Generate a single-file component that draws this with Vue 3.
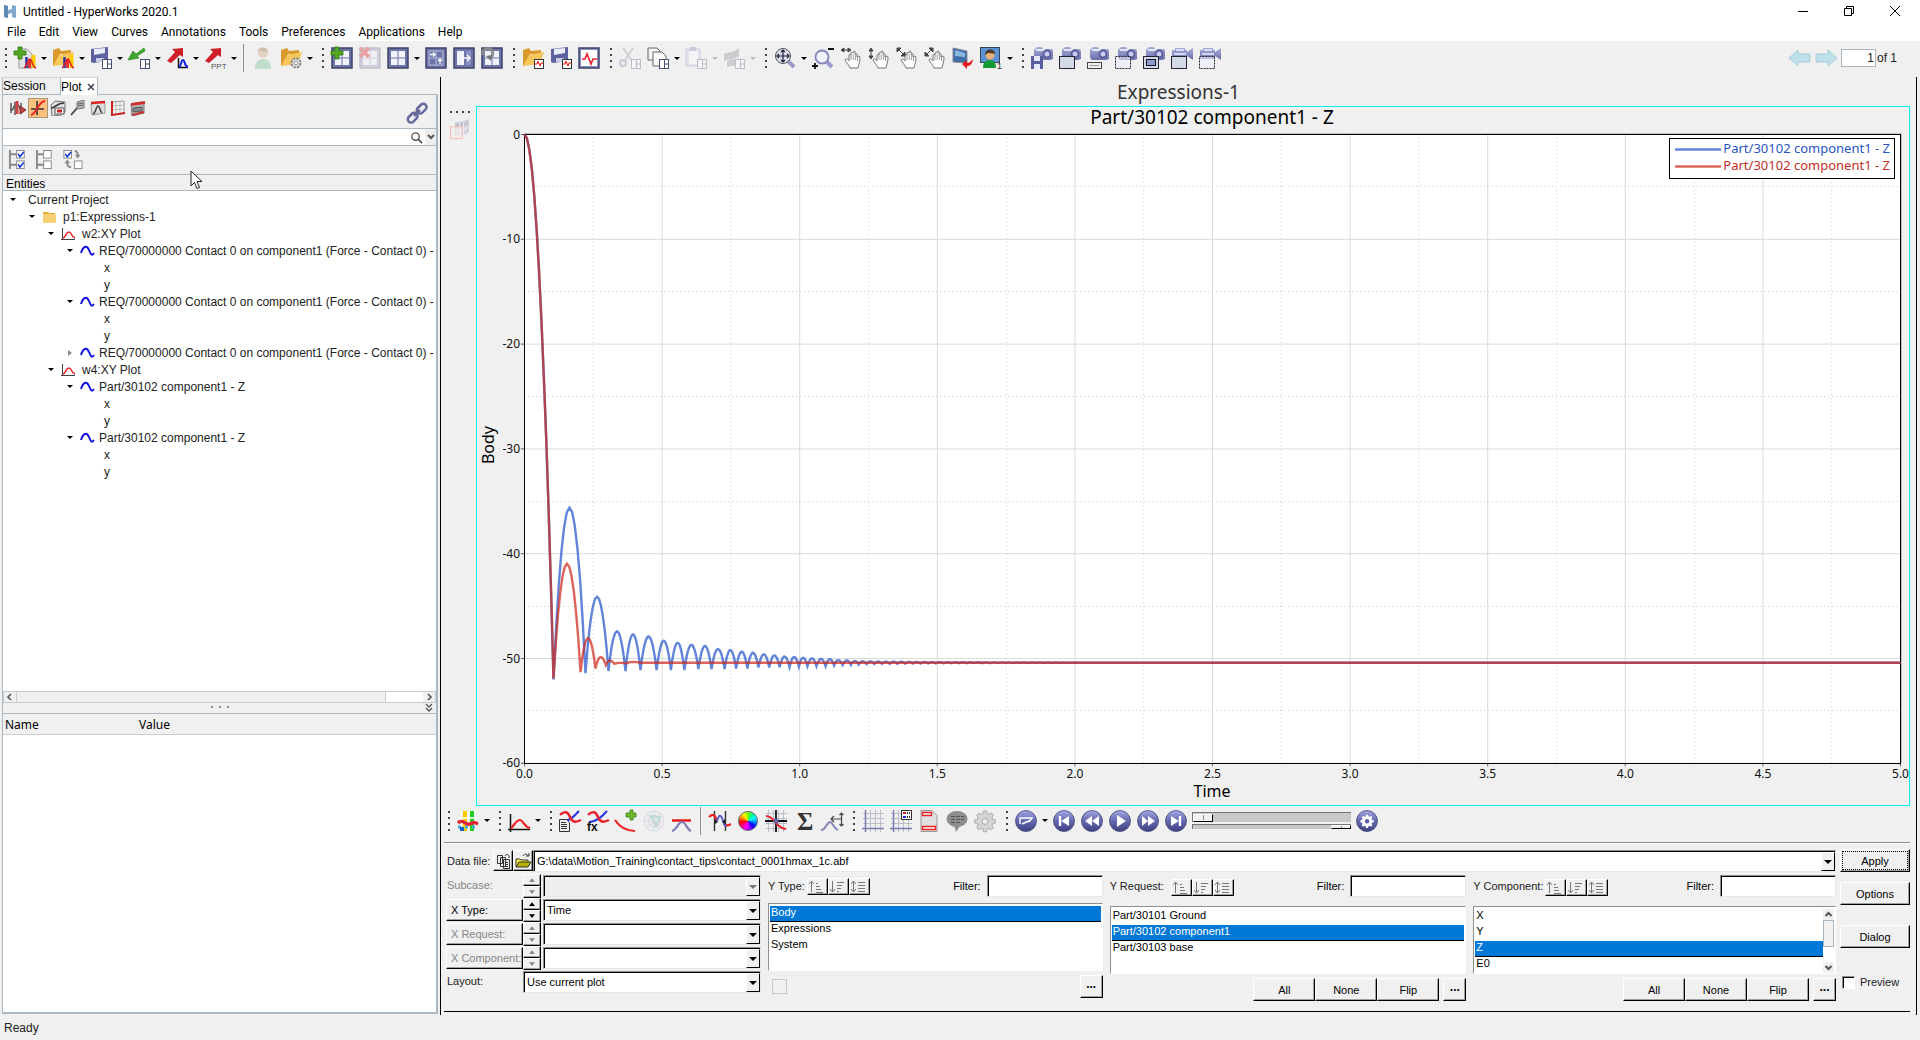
<script setup>
import { ref } from 'vue'

const menus = ['File', 'Edit', 'View', 'Curves', 'Annotations', 'Tools', 'Preferences', 'Applications', 'Help']

/* ---------- icon parts (22 x 22 grid) ---------- */
const pane = '<rect x="12.5" y="12.5" width="9" height="9" fill="#fff" stroke="#4a5078"/><path d="M17.5 13v8M17.5 17h4" stroke="#4a5078"/>'
const folder = '<path d="M1 3l6-2 2 3 10-1v4H8L4 18l-3 1z" fill="#d99a2b"/><path d="M1 19L7 8l15-3-4 12z" fill="#f7c65c"/>'
const bars = '<path d="M12.5 21V10" stroke="#23a" stroke-width="2.5"/><path d="M15.5 21V12" stroke="#e33" stroke-width="3"/><path d="M19.5 21V8" stroke="#fc0" stroke-width="4"/><path d="M10 21c3-2 4-9 6-9s2 8 6 9" fill="none" stroke="#d22" stroke-width="1.5"/>'
const floppy = '<path d="M1 2l17-2v14L3 16l-2-1z" fill="#5c62a0"/><path d="M4 2l11-1v5L4 8z" fill="#e9ebfa"/><path d="M6 11h8v4H6z" fill="#c9cbe6"/>'
const plus = '<path d="M4 0h4v4h4v4H8v4H4V8H0V4h4z" fill="#55a822" stroke="#2f7a10" stroke-width=".8"/>'
const redArrow = '<path d="M1 14L9 5 6 2l11-1v9l-3-2-9 8z" fill="#cf1f28"/>'
const win = '<rect x="1" y="1" width="20" height="20" fill="#6d74a8" stroke="#3c4268" stroke-width="1.5"/>'
const four = '<path d="M4 4h6.5v6.5H4zM11.5 4H18v6.5h-6.5zM4 11.5h6.5V18H4zM11.5 11.5H18V18h-6.5z" fill="#f2f3fc"/>'
const wave = '<rect x="12.5" y="12.5" width="9" height="9" fill="#fff" stroke="#333"/><path d="M13 17h2l1-3 2 5 1-3h2" fill="none" stroke="#e11"/>'
const hand = '<path d="M10 21c-1-3-4-6-5-8 1-2 3-1 4 1V8c1-1 2-1 2 0V6c1-1 2-1 2 0V5c1-1 2-1 2 0v2c1-1 2 0 2 0v3c1-1 3-1 3 0 0 4-1 7-2 11z" fill="#fff" stroke="#666" stroke-width=".9"/><path d="M11 8v5M13.2 7v6M15.4 7v6M17.5 9v5" stroke="#777" stroke-width=".7"/>'
const camera = '<path d="M3 3l3-3h5l1 2h9l1 2v8l-3 1H5l-2-2z" fill="url(#steel)"/><rect x="5" y="2" width="9" height="2" fill="#e5e6f8"/><circle cx="16" cy="7" r="4.5" fill="#5a5f9c"/><circle cx="16" cy="7" r="2.5" fill="#c9ccf2"/>'
const video = '<path d="M1 3h3V1h10v2h2v2l6-4v12l-6-4v3H1z" fill="url(#steel)"/><path d="M5 3h8M3 7h12" stroke="#eef" stroke-width="1.5"/>'
const frame = '<rect x=".5" y="9.5" width="15" height="12" fill="#d3d9e6" stroke="#223"/>'
const dashed = '<rect x=".5" y="9.5" width="15" height="12" fill="#eef" fill-opacity=".6" stroke="#223" stroke-dasharray="2 1"/>'
const ball = '<circle cx="11" cy="11" r="10.5" fill="url(#ball)" stroke="#45487c" stroke-width=".8"/>'
const lens = '<path d="M13 13l7 7" stroke="#9a9cce" stroke-width="4"/>'
const gridLines = '<path d="M1 3.5h21M1 8.5h21M1 13.5h21M1 18.5h21M3.5 0v22M8.5 0v22M13.5 0v22M18.5 0v22" stroke="#bdbdcb"/>'
const pair = '<path d="M2 12C8 12 14 8 20 1" fill="none" stroke="#2536e8" stroke-width="2"/><path d="M1 5c5-5 8-3 10 2s5 6 11 3" fill="none" stroke="#e8202a" stroke-width="2.4"/>'
const gearPath = 'M9.5 1h3l.6 2.6 1.9.8 2.3-1.4 2.1 2.1L18 7.4l.8 1.9 2.6.6v3l-2.6.6-.8 1.9 1.4 2.3-2.1 2.1-2.3-1.4-1.9.8-.6 2.6h-3l-.6-2.6-1.9-.8-2.3 1.4-2.1-2.1L4 15.4l-.8-1.9-2.6-.6v-3l2.6-.6.8-1.9-1.4-2.3L4.7 3 7 4.4l1.9-.8z'

const icons = {
  newSession: '<path d="M5 2h8l5 5v14H5z" fill="#e2e2e2" stroke="#999"/>' + bars + plus,
  openSession: folder + bars,
  saveSession: floppy + pane,
  importFile: '<path d="M16 1L8 7 5 4 0 13l11-2-2-2 8-5z" fill="#3da62c" stroke="#267a18" stroke-width=".6"/>' + pane,
  exportCurve: redArrow + '<path d="M12.5 11v9.5H22" fill="none" stroke="#111" stroke-width="1.5"/><path d="M13 20c2 0 2-7 4-7s1 6 5 7" fill="none" stroke="#1620e0" stroke-width="2"/>',
  exportPpt: redArrow + '<text x="7" y="22" font-size="8" font-family="Liberation Sans, sans-serif" fill="#555">PPT</text>',
  user: '<g opacity=".45"><path d="M3 22c0-8 4-10 8-10s8 2 8 10z" fill="#8cc8a4"/><circle cx="11" cy="6" r="5" fill="#d8b48c"/><path d="M6 5c0-6 10-6 10 1-3-3-6 0-7-2z" fill="#a08468"/></g>',
  folderGear: folder + '<circle cx="16" cy="16" r="4.5" fill="#ececec" stroke="#8a8a8a" stroke-width="2" stroke-dasharray="2.5 1"/><circle cx="16" cy="16" r="2" fill="#fff" stroke="#888"/>',
  pageAdd: win + four + plus,
  pageDelete: '<g opacity=".25">' + win + four + '</g><path d="M1 1l9 9M10 1l-9 9" stroke="#eaa0a0" stroke-width="3.5"/>',
  pageLayout: win + four,
  expand: win + '<path d="M4 4h14v14H4zM4 11h7M11 4v14M11 11h7" fill="none" stroke="#b9bde0"/><path d="M5 7.5h5M8 5.5l2 2-2 2M15 17v-5M13 14l2-2 2 2" fill="none" stroke="#fff" stroke-width="1.3"/>',
  swap: win + '<path d="M4 4h7v14H4z" fill="#f2f3fc"/><path d="M13 4h5v14h-5z" fill="#8b91c4"/><path d="M10 11h7M14 8l3 3-3 3" fill="none" stroke="#fff" stroke-width="1.4"/>',
  rotatePage: win + four + '<path d="M2 8a5 5 0 1 1 7 3" fill="none" stroke="#8c8c8c" stroke-width="3"/><path d="M5 9l6-1-1 6z" fill="#777"/>',
  openCurve: folder + wave,
  saveCurve: floppy + wave,
  curveWin: '<rect x="1" y="1" width="20" height="20" fill="#8a90bc" stroke="#3c4268" stroke-width="1.5"/><rect x="3" y="3" width="16" height="16" fill="#fff"/><path d="M4 12h3l2-5 4 10 2-5h4" fill="none" stroke="#e8202a" stroke-width="1.6"/>',
  cut: '<g opacity=".3"><path d="M4 1l10 14M14 1L5 15" stroke="#889" stroke-width="2"/><circle cx="4" cy="16" r="3" fill="none" stroke="#77a" stroke-width="2"/>' + pane + '</g>',
  copy: '<path d="M1 1h9l3 3v9H1z" fill="#f4f4f4" stroke="#666"/><path d="M6 5h9l4 4v10H6z" fill="#fafafa" stroke="#666"/>' + pane,
  paste: '<g opacity=".3"><rect x="1" y="2" width="14" height="17" fill="#b8bce8" stroke="#88c"/><rect x="4" y="4" width="9" height="13" fill="#fff"/><rect x="5" y="0" width="6" height="4" fill="#77b"/>' + pane + '</g>',
  layers: '<g opacity=".3"><path d="M1 7c5-3 8 0 15-6v8c-6 5-10 2-15 5zM4 14c5-3 7 0 12-3v6c-5 3-8 1-12 3z" fill="#778"/>' + pane + '</g>',
  fit: lens + '<circle cx="9" cy="9" r="7.5" fill="#dfe0f6" stroke="#555"/><path d="M9 3v12M3 9h12M7 5l2-2 2 2M7 13l2 2 2-2M5 7L3 9l2 2M13 7l2 2-2 2" fill="none" stroke="#223" stroke-width="1.2"/>',
  zoomBox: lens + '<circle cx="10" cy="10" r="6.5" fill="#f0f1fd" stroke="#8285b8" stroke-width="1.8"/><path d="M16 2h6M0 19h6M3 16v6" stroke="#111" stroke-width="1.8"/>',
  panX: hand + '<path d="M2 3h8M4 1L1 3l3 2zM8 1l3 2-3 2z" fill="#444" stroke="#444"/>',
  panY: hand + '<path d="M3 3v8M1 4l2-3 2 3zM1 9l2 3 2-3z" fill="#444" stroke="#444"/>',
  panXY: hand + '<path d="M2 2l6 6M1 1h4L1 5zM9 9H5l4-4z" fill="#444" stroke="#444"/>',
  panD: hand + '<path d="M8 2L2 8M9 1v4L5 1zM1 9V5l4 4z" fill="#444" stroke="#444"/>',
  screenBack: '<path d="M1 1l14 3v12L1 15z" fill="#3d6ea8" stroke="#889"/><path d="M3 3l10 3v4L3 9z" fill="#8ab8e0"/><path d="M10 17l5-4v3c3 0 4-2 6-4-1 6-3 7-6 7v3z" fill="#e0141c"/>',
  userView: '<rect x=".5" y=".5" width="19" height="15" fill="#5b92d4" stroke="#345"/><path d="M3 21c0-6 3-8 7-8s6 3 6 8z" fill="#149a34"/><circle cx="10" cy="8" r="4.5" fill="#e9b07a"/><path d="M5 8c0-7 10-7 10-1-3-1-5-1-7-1z" fill="#50382a"/><text x="17" y="22" font-size="9" font-family="Liberation Sans, sans-serif" fill="#333">1</text>',
  camSave: camera + '<rect x="0" y="9" width="12" height="13" fill="#585ea0"/><path d="M3 9h6v5H3zM3 17h6v5H3z" fill="#e6e8fa"/>',
  camFrame: camera + frame,
  camBar: camera + '<rect x=".5" y="15.5" width="14" height="6" fill="#eee" stroke="#444"/><path d="M3 18.5h9" stroke="#999"/>',
  camDash: camera + dashed,
  camRegion: camera + frame + '<rect x="3.5" y="12.5" width="9" height="6" fill="#8f9ad0" stroke="#112"/>',
  vidFrame: video + frame,
  vidDash: video + dashed,
  prev: '<path d="M1 9l9-8v4h12v8H10v4z" fill="#bfe0e8" stroke="#a8cdd8"/>',
  next: '<path d="M21 9l-9-8v4H0v8h12v4z" fill="#bfe0e8" stroke="#a8cdd8"/>',
  app: '<rect x="1" y="1" width="20" height="20" rx="4" fill="#e8e8ea"/><path d="M8 1v20" stroke="#fc0" stroke-width="4"/><path d="M15 1v20" stroke="#2c2" stroke-width="4"/><path d="M1 8h20M4 1v20M11.5 1v20M18.5 1v20" stroke="#fff" stroke-width="1.5"/><path d="M1 17h20" stroke="#4ad" stroke-width="3" stroke-dasharray="3 4"/><path d="M1 13c5-5 8 3 12 1s4-2 8 0" fill="none" stroke="#e22435" stroke-width="3.5"/><path d="M3 17h4v4H3z" fill="#1560c0"/>',
  xyPlot: '<path d="M2.5 4v18M0 19.5h22" stroke="#111" stroke-width="1.5"/><path d="M3 18c3-2 5-8 9-8 3 0 4 7 10 8" fill="none" stroke="#e22" stroke-width="2.2"/>',
  curveList: pair + '<path d="M.5 9.5h7l3 3v9H.5z" fill="#eee" stroke="#333"/><path d="M2 12.5h5M2 14.5h6M2 16.5h6M2 18.5h6" stroke="#333"/>',
  curveFx: pair + '<text x="0" y="21" font-size="12" font-weight="bold" font-family="Liberation Sans, sans-serif" fill="#111">fx</text>',
  curveAdd: '<path d="M0 10c4 6 10 11 20 11" fill="none" stroke="#e22" stroke-width="2.2"/><path d="M15 0h3v3h3v4h-3v3h-3V7h-4V3h4z" fill="#6bb82a" stroke="#398012" stroke-width=".8"/>',
  radar: '<g opacity=".3"><circle cx="11" cy="11" r="10" fill="#e6e6f4" stroke="#aac"/><circle cx="11" cy="11" r="6" fill="none" stroke="#99b"/><path d="M1 11h20M11 1v20M4 4l14 14M18 4L4 18" stroke="#aab"/><path d="M8 6l9 1-4 9z" fill="none" stroke="#4a8" stroke-width="2"/></g>',
  maxLine: '<path d="M1 10.5h19" stroke="#e81010" stroke-width="2.4"/><path d="M1 21c5-1 6-9 10-9s5 8 9 9" fill="none" stroke="#7a7cb4" stroke-width="2.2"/>',
  scan: '<path d="M5.5 1v20M16.5 1v20" stroke="#333" stroke-width="1.4"/><path d="M0 7c4-4 6-2 8 4" fill="none" stroke="#e22" stroke-width="2.2"/><path d="M8 11c2-7 4-7 6 0s3 5 4 4" fill="none" stroke="#5a5ed0" stroke-width="2"/><path d="M17 15c2 1 3 0 5-1" stroke="#e22" stroke-width="2.2" fill="none"/><path d="M6 9v5l3-2zM16 9v5l-3-2z" fill="#222"/>',
  cross: gridLines + '<path d="M0 11h22M11 0v22" stroke="#111" stroke-width="1.8"/><path d="M1 6c9 0 9 12 20 13" fill="none" stroke="#e22" stroke-width="1.8"/><circle cx="11" cy="11" r="2.5" fill="#66a"/>',
  sigma: '<text x="4" y="20" font-size="25" font-weight="bold" font-family="Liberation Serif, serif" fill="#333">Σ</text>',
  slope: '<path d="M0 20c5 0 6-8 9-8s3 6 8 8" fill="none" stroke="#8486b8" stroke-width="2"/><path d="M11 9h9M13 6l-3 3 3 3M20.5 3v13M18.5 5l2-2 2 2M18.5 14l2 2 2-2" fill="none" stroke="#444" stroke-width="1.2"/>',
  gridA: gridLines + '<path d="M3.5 0v22M0 18.5h22" stroke="#7a7cae" stroke-width="1.5"/>',
  gridB: gridLines + '<path d="M3.5 0v22M0 18.5h22" stroke="#7a7cae" stroke-width="1.5"/><rect x="11.5" y=".5" width="10" height="9" fill="#fff" stroke="#333"/><path d="M13 3h3" stroke="#e22" stroke-width="2"/><path d="M13 7h3" stroke="#22e" stroke-width="2"/><path d="M17 3h3M17 7h3" stroke="#333" stroke-width="2" stroke-dasharray="1"/>',
  header: '<path d="M3 .5h11l5 5V21.5H3z" fill="#e0e0e0" stroke="#999"/><path d="M4.5 2.5h9v3h-9zM4.5 16.5h13v3h-13z" fill="#fff" stroke="#e22" stroke-width="1.4"/>',
  note: '<ellipse cx="11" cy="9" rx="10.5" ry="8" fill="#8e8e8e"/><path d="M8 15l2 7 4-6z" fill="#8e8e8e"/><path d="M5 6.5h13M5 9.5h13M5 12.5h10" stroke="#555" stroke-width="1.2" stroke-dasharray="4 1"/>',
  gearGray: '<path d="' + gearPath + '" fill="#d4d4d4" stroke="#aaa"/><circle cx="11" cy="11.4" r="3" fill="#efefef" stroke="#aaa"/>',
  animMode: ball + '<path d="M5 14V8h12l-3 4M7 14l9-4" fill="none" stroke="#fff" stroke-width="1.4"/>',
  first: ball + '<path d="M7 6v10" stroke="#fff" stroke-width="2.4"/><path d="M16 6v10l-8-5z" fill="#fff"/>',
  rewind: ball + '<path d="M11 6v10l-7-5zM18 6v10l-7-5z" fill="#fff"/>',
  play: ball + '<path d="M8 5v12l9-6z" fill="#fff"/>',
  forward: ball + '<path d="M11 6v10l7-5zM5 6v10l6-5z" fill="#fff"/>',
  last: ball + '<path d="M15 6v10" stroke="#fff" stroke-width="2.4"/><path d="M6 6v10l8-5z" fill="#fff"/>',
  gearBall: ball + '<g transform="translate(4 4) scale(.64)"><path d="' + gearPath + '" fill="#fff"/><circle cx="11" cy="11.4" r="3.5" fill="#5d62a8"/></g>',
  mesh: '<path d="M6 3c5 0 9-1 14-3v13c-5 4-9 3-14 4z" fill="#d6d8e0" stroke="#c6c8d2"/><path d="M6 4c5 0 9-1 14-3v4c-5 2-9 3-14 3z" fill="#bfc1cc"/><path d="M11 3v14M15 2v14M6 12c5 0 9-1 14-4" fill="none" stroke="#eef"/><rect x=".5" y="7.5" width="13" height="13" fill="#f5ecea" fill-opacity=".6" stroke="#f5b9ae"/>'
}

const topTools = [
  { icon: 'handle' },
  { icon: 'newSession', menu: 1 }, { icon: 'openSession', menu: 1 }, { icon: 'saveSession', menu: 1 },
  { icon: 'importFile', menu: 1 }, { icon: 'exportCurve', menu: 1 }, { icon: 'exportPpt', menu: 1 },
  { icon: 'sep' }, { icon: 'user' }, { icon: 'folderGear', menu: 1 },
  { icon: 'handle' }, { icon: 'pageAdd' }, { icon: 'pageDelete' }, { icon: 'pageLayout', menu: 1 },
  { icon: 'expand' }, { icon: 'swap' }, { icon: 'rotatePage' },
  { icon: 'handle' }, { icon: 'openCurve' }, { icon: 'saveCurve' }, { icon: 'curveWin' },
  { icon: 'handle' }, { icon: 'cut' }, { icon: 'copy', menu: 1 }, { icon: 'paste', menu: 1, off: 1 }, { icon: 'layers', menu: 1, off: 1 },
  { icon: 'handle' }, { icon: 'fit', menu: 1 }, { icon: 'zoomBox' }, { icon: 'panX' }, { icon: 'panY' },
  { icon: 'panXY' }, { icon: 'panD' }, { icon: 'screenBack' }, { icon: 'userView', menu: 1 },
  { icon: 'handle' }, { icon: 'camSave' }, { icon: 'camFrame' }, { icon: 'camBar' }, { icon: 'camDash' },
  { icon: 'camRegion' }, { icon: 'vidFrame' }, { icon: 'vidDash' }
]
const plotTools = [
  { icon: 'handle' }, { icon: 'app', menu: 1 }, { icon: 'handle' }, { icon: 'xyPlot', menu: 1 },
  { icon: 'handle' }, { icon: 'curveList' }, { icon: 'curveFx' }, { icon: 'curveAdd' }, { icon: 'radar' }, { icon: 'maxLine' },
  { icon: 'sep' }, { icon: 'scan' }, { icon: 'wheel' }, { icon: 'cross' }, { icon: 'sigma' }, { icon: 'slope' },
  { icon: 'handle' }, { icon: 'gridA' }, { icon: 'gridB' }, { icon: 'header' }, { icon: 'note' }, { icon: 'gearGray' },
  { icon: 'handle' }, { icon: 'animMode', menu: 1 }, { icon: 'first' }, { icon: 'rewind' }, { icon: 'play' },
  { icon: 'forward' }, { icon: 'last' }
]

/* ---------- browser panel (16 x 16 grid) ---------- */
const browserTools = [
  { name: 'Curves', art: '<path d="M1 3v10M5 2v13M11 3v11M1 11c3-1 3-8 6-7s3 8 6 8" fill="none" stroke="#555" stroke-width="1.5"/><path d="M7 1v13" stroke="#c44" stroke-width="3"/><path d="M10 6l6 4-6 4z" fill="#c44" stroke="#733"/>' },
  { name: 'Axes', on: true, art: '<path d="M1 9h13M7 1v14" stroke="#333" stroke-width="1.6"/><path d="M1 15c7-2 6-13 14-14" fill="none" stroke="#e22" stroke-width="2"/>' },
  { name: 'Legend', art: '<path d="M1 5l4-4 10 1v10l-4 3-9 1z" fill="#ddd" stroke="#777"/><path d="M1 8c5 0 5-5 13-5" fill="none" stroke="#333" stroke-width="1.5"/><rect x="5" y="8" width="9" height="6" fill="#fff" stroke="#555"/><path d="M7 11h5" stroke="#c22" stroke-width="3"/>' },
  { name: 'Notes', art: '<path d="M1 15l7-8" stroke="#444" stroke-width="1.8"/><path d="M7 2l7-2v8l-7 1z" fill="#bbb" stroke="#777"/><path d="M8 4l5-1M8 6l5-1" stroke="#555"/>' },
  { name: 'Datums', art: '<path d="M1 4l14-2v11l-13 2z" fill="#ddd" stroke="#999"/><path d="M1 3l14-1" stroke="#d22" stroke-width="2.5"/><path d="M3 14c3-1 3-8 5-8s2 6 4 7" fill="none" stroke="#444" stroke-width="1.5"/>' },
  { name: 'Grid', art: '<path d="M2 2l12-1v12l-12 2z" fill="#f6f6f6" stroke="#999"/><path d="M6 2v12M10 2v12M2 6l12-1M2 10l12-1" stroke="#bbb"/><path d="M2 1v14l13-2" fill="none" stroke="#c22" stroke-width="2"/>' },
  { name: 'Header', art: '<path d="M1 4l13-2v11l-12 3z" fill="#bbb" stroke="#777"/><path d="M1 3l14-2v3L1 6z" fill="#c33"/><path d="M3 8l9-1v4l-9 1z" fill="#888" stroke="#555"/><path d="M2 15l12-3" fill="none" stroke="#c33" stroke-width="2"/>' }
]
const box = (x, y, on) => `<rect x="${x}.5" y="${y}.5" width="8" height="8" fill="#fff" stroke="#888"/>` + (on ? `<path d="M${x + 2} ${y + 4}l2 3 4-5" fill="none" stroke="#1030d0" stroke-width="1.6"/>` : '')
const branch = '<path d="M1.5 0v20M2 4.5h6M2 15.5h6" stroke="#888" stroke-width="2"/>'
const checkTools = [
  { name: 'Check all', art: branch + box(8, 0, 1) + box(8, 11, 1) },
  { name: 'Uncheck all', art: branch + box(8, 0, 0) + box(8, 11, 0) },
  { name: 'Reverse', art: box(1, 0, 1) + box(12, 11, 0) + '<path d="M13 1c2 0 3 2 3 5M9 18c-3 0-4-2-4-4" fill="none" stroke="#888" stroke-width="2"/><path d="M13 5h6l-3 4zM2 14h6l-3-4z" fill="#888"/>' }
]

const treeIcons = {
  folder: '<path d="M1 2h5l1 1h6v10H1z" fill="#e2a93c"/><rect x="1" y="4" width="13" height="9" rx="1" fill="#f8cf74"/>',
  plot: '<path d="M1.5 1v12M0 12.5h14" stroke="#444"/><path d="M2 11c3-1 3-6 6-6s2 5 6 6" fill="none" stroke="#e22" stroke-width="1.5"/>',
  curve: '<path d="M1 9c2-7 6-8 8-3s3 6 5 3" fill="none" stroke="#1010e0" stroke-width="2"/>'
}
const req = 'REQ/70000000 Contact 0 on component1 (Force - Contact 0) - I'
const part = 'Part/30102 component1 - Z'
const leaf = t => ({ level: 4, text: t })
const tree = [
  { level: 0, text: 'Current Project', open: true },
  { level: 1, text: 'p1:Expressions-1', icon: 'folder', open: true },
  { level: 2, text: 'w2:XY Plot', icon: 'plot', open: true },
  { level: 3, text: req, icon: 'curve', open: true }, leaf('x'), leaf('y'),
  { level: 3, text: req, icon: 'curve', open: true }, leaf('x'), leaf('y'),
  { level: 3, text: req, icon: 'curve', open: false },
  { level: 2, text: 'w4:XY Plot', icon: 'plot', open: true },
  { level: 3, text: part, icon: 'curve', open: true }, leaf('x'), leaf('y'),
  { level: 3, text: part, icon: 'curve', open: true }, leaf('x'), leaf('y')
]

/* ---------- chart ---------- */
const px = t => 47.5 + t * 275.2
const py = v => 27.5 - v * 10.48
const xTicks = Array.from({ length: 11 }, (_, i) => i / 2)
const yTicks = [0, -10, -20, -30, -40, -50, -60]

// One bounce per row: end time, peak, value at the end
const blue = [
  [0.2217, -35.6, -51.4], [0.3052, -44.1, -51.2], [0.367, -47.4, -51.2], [0.4215, -47.7, -51.1], [0.48, -47.9, -51.1],
  [0.532, -48.3, -51.1], [0.581, -48.5, -51.1], [0.632, -48.7, -51], [0.6795, -48.8, -51], [0.727, -49.1, -51],
  [0.769, -49.2, -50.95], [0.81, -49.35, -50.95], [0.85, -49.45, -50.86], [0.889, -49.6, -50.86], [0.927, -49.7, -50.82],
  [0.963, -49.82, -50.82], [0.997, -49.87, -50.76], [1.028, -49.93, -50.73], [1.061, -50, -50.73], [1.094, -50.05, -50.73],
  [1.125, -50.07, -50.67], [1.156, -50.16, -50.63], [1.186, -50.18, -50.6], [1.214, -50.24, -50.57]
]
for (let i = 0, t = 1.243; t < 2.6; i++, t += 0.028) {
  const a = 0.13 * Math.exp(-i / 12)
  blue.push([t, -50.4 + a, -50.4 - a])
}
blue.push([5, -50.4, -50.4])
const red = [
  [0.2035, -40.95, -51.3], [0.258, -48.05, -50.95], [0.2955, -49.87, -50.63], [0.326, -50.2, -50.5],
  [0.37, -50.42, -50.45], [0.42, -50.33, -50.4], [5, -50.4, -50.4]
]
function curve(bounces, floor) {
  const pts = []
  for (let i = 0; i <= 12; i++) {
    pts.push([0.1054 * i / 12, floor * (i / 12) ** 2])
  }
  let t0 = 0.1054
  let v0 = floor
  for (const [t1, peak, v1] of bounces) {
    for (let k = 1; k <= 12; k++) {
      const u = k / 6 - 1
      const end = u < 0 ? v0 : v1
      pts.push([t0 + (t1 - t0) * k / 12, peak + (end - peak) * u * u])
    }
    t0 = t1
    v0 = v1
  }
  return pts.map(([t, v]) => px(t).toFixed(1) + ',' + py(v).toFixed(1)).join(' ')
}
const bluePoints = curve(blue, -52)
const redPoints = curve(red, -51.9)

/* ---------- data panel ---------- */
const sortArt = [
  '<path d="M3.5 12V1M1 4l2.5-3L6 4M8 3.5h2M8 6.5h4M8 9.5h5M8 12.5h7" fill="none" stroke="#777"/>',
  '<path d="M3.5 1v11M1 9l2.5 3L6 9M8 2.5h7M8 5.5h5M8 8.5h4M8 11.5h2" fill="none" stroke="#777"/>',
  '<path d="M3.5 1v11M1 4l2.5-3L6 4M1 9l2.5 3L6 9M8 2.5h7M8 5.5h7M8 8.5h7M8 11.5h7" fill="none" stroke="#777"/>'
]
const xRows = [
  { id: 'sub', label: 'Subcase:', kind: 'label', value: '', off: true },
  { id: 'xt', label: 'X Type:', kind: 'button', value: 'Time' },
  { id: 'xr', label: 'X Request:', kind: 'button', value: '', dim: true },
  { id: 'xc', label: 'X Component:', kind: 'button', value: '', dim: true }
]
const yCols = [
  { id: 'type', label: 'Y Type:', items: ['Body', 'Expressions', 'System'], picked: 'Body' },
  { id: 'req', label: 'Y Request:', items: ['Part/30101 Ground', 'Part/30102 component1', 'Part/30103 base'], picked: 'Part/30102 component1', all: true },
  { id: 'comp', label: 'Y Component:', items: ['X', 'Y', 'Z', 'E0'], picked: 'Z', all: true, scroll: true }
]
const page = ref('1')
const preview = ref(false)
</script>

<template>
  <div class="app">
    <svg class="defs" aria-hidden="true">
      <defs>
        <linearGradient id="steel" x1="0" y1="0" x2="0" y2="1">
          <stop offset="0" stop-color="#a9acd8" /><stop offset="1" stop-color="#6a6eaa" />
        </linearGradient>
        <linearGradient id="ball" x1="0" y1="0" x2="0" y2="1">
          <stop offset="0" stop-color="#a3a6e0" /><stop offset=".5" stop-color="#6468b0" /><stop offset="1" stop-color="#3e4280" />
        </linearGradient>
      </defs>
    </svg>

    <header class="titlebar">
      <svg class="logo" viewBox="0 0 12 13"><path d="M0 0l4 1v4l4-1V0l4 1v12l-4-1V8L4 9v4l-4-1z" fill="#7fa8cc" /><path d="M0 0l4 1v12l-4-1z" fill="#5d8ab4" /></svg>
      <h1>Untitled - HyperWorks 2020.1</h1>
      <div class="winbtns">
        <button aria-label="Minimize"><svg viewBox="0 0 12 12"><path d="M1 6.5h10" stroke="#000" /></svg></button>
        <button aria-label="Restore"><svg viewBox="0 0 12 12"><path d="M1.5 3.5h7v7h-7zM3.5 3V1.5h7v7H9" fill="none" stroke="#000" /></svg></button>
        <button aria-label="Close"><svg viewBox="0 0 12 12"><path d="M1 1l10 10M11 1L1 11" stroke="#000" /></svg></button>
      </div>
    </header>

    <nav class="menubar">
      <button v-for="m in menus" :key="m">{{ m }}</button>
    </nav>

    <div class="toolbar top">
      <template v-for="(t, i) in topTools" :key="i">
        <span v-if="t.icon === 'handle'" class="handle"></span>
        <span v-else-if="t.icon === 'sep'" class="sep"></span>
        <template v-else>
          <button class="tool" :aria-label="t.icon"><svg class="icon" viewBox="0 0 22 22" v-html="icons[t.icon]"></svg></button>
          <button v-if="t.menu" class="caret" :class="{ off: t.off }" :aria-label="t.icon + ' menu'"></button>
        </template>
      </template>
      <div class="pager">
        <button class="tool" aria-label="Previous page"><svg class="icon" viewBox="0 0 22 18" v-html="icons.prev"></svg></button>
        <button class="tool" aria-label="Next page"><svg class="icon" viewBox="0 0 22 18" v-html="icons.next"></svg></button>
        <input id="page" v-model="page" type="text"><label for="page">of 1</label>
      </div>
    </div>

    <div class="body">
      <aside class="browser">
        <div class="tabs">
          <button class="tab">Session</button>
          <button class="tab active">Plot <svg viewBox="0 0 8 8"><path d="M1 1l6 6M7 1L1 7" stroke="#445" stroke-width="1.5" /></svg></button>
        </div>
        <div class="pane">
          <div class="btools">
            <button v-for="b in browserTools" :key="b.name" :aria-label="b.name" :class="{ on: b.on }"><svg viewBox="0 0 16 16" v-html="b.art"></svg></button>
            <button class="link" aria-label="Link">
              <svg viewBox="0 0 22 22"><g fill="none" stroke="#666a9e" stroke-width="2.5"><rect x="-5.5" y="-3" width="11" height="6.5" rx="3.2" transform="translate(15.5 6.5) rotate(-45)" /><rect x="-5.5" y="-3" width="11" height="6.5" rx="3.2" transform="translate(6.5 15.5) rotate(-45)" /><path d="M8 14l6-6" /></g></svg>
            </button>
          </div>
          <div class="search">
            <input type="text" aria-label="Search">
            <svg viewBox="0 0 14 14"><circle cx="6" cy="6" r="4" fill="none" stroke="#555" stroke-width="1.5" /><path d="M9 9l4 4" stroke="#555" stroke-width="2" /></svg>
            <button aria-label="Search options"><svg viewBox="0 0 8 6"><path d="M1 1l3 3 3-3" fill="none" stroke="#555" stroke-width="2" /></svg></button>
          </div>
          <div class="ctools">
            <button v-for="c in checkTools" :key="c.name" :aria-label="c.name"><svg viewBox="0 0 21 21" v-html="c.art"></svg></button>
          </div>
          <div class="entities">Entities</div>
          <ul class="tree">
            <li v-for="(n, i) in tree" :key="i" :class="'l' + n.level">
              <span class="twisty"><i v-if="n.open !== undefined" :class="n.open ? 'down' : 'right'"></i></span>
              <svg v-if="n.icon" viewBox="0 0 15 14" v-html="treeIcons[n.icon]"></svg>
              <span class="txt">{{ n.text }}</span>
            </li>
          </ul>
          <div class="hscroll">
            <svg viewBox="0 0 12 10"><path d="M7 2L4 5l3 3" fill="none" stroke="#555" stroke-width="1.6" /></svg>
            <span class="rail"><span class="thumb"></span></span>
            <svg viewBox="0 0 12 10"><path d="M5 2l3 3-3 3" fill="none" stroke="#555" stroke-width="1.6" /></svg>
          </div>
          <div class="splitter">
            <i></i><i></i><i></i>
            <svg viewBox="0 0 8 10"><path d="M1 1l3 3 3-3M1 5l3 3 3-3" fill="none" stroke="#555" stroke-width="1.3" /></svg>
          </div>
          <div class="props">
            <table><thead><tr><th>Name</th><th>Value</th></tr></thead></table>
          </div>
        </div>
      </aside>

      <main class="work">
        <h2 class="pagetitle">Expressions-1</h2>
        <div class="stage">
          <div class="side">
            <span class="dots"></span>
            <button aria-label="Mesh view"><svg viewBox="0 0 22 22" v-html="icons.mesh"></svg></button>
          </div>
          <div class="chart">
            <svg viewBox="0 0 1432 698">
              <rect x="47" y="26" width="1378" height="630" fill="#c4c4c4" />
              <rect x="47" y="27" width="1377" height="629" fill="#fff" />
              <g stroke="#dadada">
                <line v-for="x in xTicks" :key="'x' + x" :x1="px(x)" :x2="px(x)" y1="27" y2="661" />
                <line v-for="y in yTicks" :key="'y' + y" x1="42" x2="1423" :y1="py(y)" :y2="py(y)" />
              </g>
              <g stroke="#d0d0d0" stroke-dasharray="1 3">
                <line v-for="x in xTicks.slice(0, 10)" :key="'mx' + x" :x1="Math.floor(px(x + 0.25)) + 0.5" :x2="Math.floor(px(x + 0.25)) + 0.5" y1="27" y2="656" />
                <line v-for="y in yTicks.slice(0, 6)" :key="'my' + y" x1="47" x2="1423" :y1="Math.floor(py(y - 5)) + 0.5" :y2="Math.floor(py(y - 5)) + 0.5" />
              </g>
              <g stroke="#666">
                <line v-for="x in xTicks" :key="'tx' + x" :x1="px(x)" :x2="px(x)" y1="656" y2="659" />
                <line v-for="y in yTicks" :key="'ty' + y" x1="44" x2="47" :y1="py(y)" :y2="py(y)" />
              </g>
              <rect x="47.5" y="27.5" width="1376" height="629" fill="none" stroke="#000" />
              <polyline :points="bluePoints" class="curve blue" />
              <polyline :points="redPoints" class="curve red" />
              <g class="tick">
                <text v-for="x in xTicks" :key="'lx' + x" :x="px(x)" y="671" text-anchor="middle">{{ x.toFixed(1) }}</text>
                <text v-for="y in yTicks" :key="'ly' + y" x="43" :y="py(y) + 4" text-anchor="end">{{ y }}</text>
              </g>
              <text class="plot-title" x="735" y="17">Part/30102 component1 - Z</text>
              <text class="axis" x="735" y="690">Time</text>
              <text class="axis" transform="translate(17 338) rotate(-90)">Body</text>
              <rect x="1192.5" y="31.5" width="225" height="40" fill="#fff" stroke="#000" />
              <path d="M1198 42.5h46" class="curve blue" /><path d="M1198 59.5h46" class="curve red" />
              <text class="legend" x="1413" y="46" fill="#2a55c0">Part/30102 component1 - Z</text>
              <text class="legend" x="1413" y="63" fill="#c03028">Part/30102 component1 - Z</text>
            </svg>
          </div>
        </div>

        <div class="toolbar plot">
          <template v-for="(t, i) in plotTools" :key="i">
            <span v-if="t.icon === 'handle'" class="handle"></span>
            <span v-else-if="t.icon === 'sep'" class="sep"></span>
            <template v-else>
              <button class="tool" :aria-label="t.icon">
                <i v-if="t.icon === 'wheel'" class="wheel"></i>
                <svg v-else class="icon" viewBox="0 0 22 22" v-html="icons[t.icon]"></svg>
              </button>
              <button v-if="t.menu" class="caret" :aria-label="t.icon + ' menu'"></button>
            </template>
          </template>
          <div class="sliders">
            <input class="time" type="range" min="0" max="100" value="0" aria-label="Time">
            <input class="speed" type="range" min="0" max="100" value="100" aria-label="Speed">
          </div>
          <button class="tool" aria-label="Animation settings"><svg class="icon" viewBox="0 0 22 22" v-html="icons.gearBall"></svg></button>
        </div>

        <section class="panel">
          <div class="fields">
            <div class="filerow">
              <label for="file">Data file:</label>
              <button class="bevel sq" aria-label="Recent files"><svg viewBox="0 0 18 18"><path d="M3.5 3.5h5v8h-5zM6.5 5.5h5v9h-5zM9.5 7.5h6v9h-6z" fill="#eee" stroke="#333" /><path d="M11 10.5h3M11 12.5h3M11 14.5h3M11 4c1-2 3-2 4 0v2" fill="none" stroke="#333" /></svg></button>
              <button class="bevel sq" aria-label="Open file"><svg viewBox="0 0 18 18"><path d="M2 15V7h4l1 1h7v2" fill="#fff34a" stroke="#333" /><path d="M2 15l3-5h12l-3 5z" fill="#b8b000" stroke="#333" /><path d="M9 4c2-3 4-2 5 0M15 1v3h-3" fill="none" stroke="#333" /></svg></button>
              <div class="combo"><select id="file"><option>G:\data\Motion_Training\contact_tips\contact_0001hmax_1c.abf</option></select><span class="drop"><i class="down"></i></span></div>
            </div>
            <div class="cols">
              <div class="xcol">
                <div v-for="r in xRows" :key="r.id" class="xrow">
                  <label v-if="r.kind === 'label'" class="xname dim" :for="r.id">{{ r.label }}</label>
                  <button v-else class="bevel xname" :class="{ dim: r.dim }">{{ r.label }}</button>
                  <span class="spin">
                    <button class="bevel" :aria-label="r.label + ' previous'"><svg viewBox="0 0 8 5"><path d="M4 0l4 5H0z" :fill="r.value ? '#000' : '#888'" /></svg></button>
                    <button class="bevel" :aria-label="r.label + ' next'"><svg viewBox="0 0 8 5"><path d="M4 5l4-5H0z" :fill="r.value ? '#000' : '#888'" /></svg></button>
                  </span>
                  <div class="combo" :class="{ grey: r.off }"><select :id="r.id" :aria-label="r.label" :disabled="r.off"><option>{{ r.value }}</option></select><span class="drop"><i class="down"></i></span></div>
                </div>
                <div class="xrow">
                  <label class="xname" for="layout">Layout:</label>
                  <div class="combo"><select id="layout"><option>Use current plot</option></select><span class="drop"><i class="down"></i></span></div>
                </div>
              </div>

              <div v-for="c in yCols" :key="c.id" class="ycol" :class="c.id">
                <div class="yhead">
                  <label class="ylabel" :for="c.id + '-list'">{{ c.label }}</label>
                  <span class="sorts"><button v-for="(s, i) in sortArt" :key="i" class="bevel" aria-label="Sort"><svg viewBox="0 0 17 13" v-html="s"></svg></button></span>
                  <label class="flabel" :for="c.id + '-filter'">Filter:</label>
                  <input :id="c.id + '-filter'" class="sunken" type="text">
                </div>
                <div class="listbox">
                  <select :id="c.id + '-list'" size="4" multiple>
                    <option v-for="o in c.items" :key="o" :selected="o === c.picked">{{ o }}</option>
                  </select>
                  <div v-if="c.scroll" class="vscroll">
                    <svg viewBox="0 0 10 11"><path d="M2 7l3-3 3 3" fill="none" stroke="#555" stroke-width="2" /></svg>
                    <span class="vthumb"></span>
                    <svg viewBox="0 0 10 11"><path d="M2 4l3 3 3-3" fill="none" stroke="#555" stroke-width="2" /></svg>
                  </div>
                </div>
                <div class="yfoot">
                  <template v-if="c.all">
                    <button class="bevel wide">All</button><button class="bevel wide">None</button><button class="bevel wide">Flip</button>
                  </template>
                  <input v-else type="checkbox" class="flat" disabled aria-label="Keep selection">
                  <button class="bevel more">...</button>
                </div>
              </div>
            </div>
          </div>
          <div class="actions">
            <button class="bevel apply">Apply</button>
            <button class="bevel">Options</button>
            <button class="bevel dialog">Dialog</button>
            <label class="preview"><input v-model="preview" type="checkbox">Preview</label>
          </div>
        </section>
      </main>
    </div>

    <footer class="status">Ready</footer>
    <svg class="pointer" viewBox="0 0 13 20"><path d="M1 1v15l3.5-3.5L7 18.5l2.5-1-2.5-6h5z" fill="#fff" stroke="#222" /></svg>
  </div>
</template>

<style>
body { margin: 0; background: #f0f0f0; }
</style>

<style scoped>
.app { position: relative; display: flex; flex-direction: column; min-height: 100vh; background: #f0f0f0; color: #222; font: 12px/16px "Liberation Sans", Arial, sans-serif; overflow: hidden; }
.app *, .app *::before { box-sizing: border-box; }
button, input, select { font: inherit; color: inherit; border-radius: 0; margin: 0; }
button { padding: 0; border: 0; background: none; }
svg { display: block; flex: none; }
.defs { position: absolute; width: 0; height: 0; }

.titlebar { display: flex; align-items: center; height: 22px; padding-left: 4px; background: #fff; font-family: Roboto, sans-serif; }
.logo { width: 12px; height: 13px; }
h1 { margin: 2px 0 0 7px; font-size: 12px; font-weight: 400; line-height: 16px; color: #000; }
.winbtns { display: flex; margin-left: auto; }
.winbtns button { display: flex; justify-content: center; width: 46px; padding-right: 4px; }
.winbtns svg { width: 12px; height: 12px; }
.menubar { display: flex; gap: 13px; height: 19px; padding-left: 7px; background: #fff; color: #000; font: 12px/20px Roboto, sans-serif; }

.toolbar { display: flex; align-items: center; }
.toolbar.top { height: 36px; padding-bottom: 2px; }
.handle { flex: none; width: 13px; height: 20px; background: linear-gradient(#444 2px, transparent 2px) 7px 0 / 2px 6px repeat-y; }
.toolbar.top > .handle:first-child { width: 11px; background-position: 5px 0; }
.sep { flex: none; width: 10px; height: 28px; background: linear-gradient(#909090, #909090) 4px 0 / 1px 100% no-repeat; }
.tool { flex: none; display: flex; justify-content: center; width: 28px; }
.icon { width: 22px; height: 22px; overflow: visible; }
.caret { flex: none; display: flex; width: 10px; height: 22px; align-items: center; justify-content: center; }
.caret::before { content: ""; border: 3px solid transparent; border-top-color: #000; border-bottom: 0; }
.caret.off::before { border-top-color: #bbb; }
.pager { display: flex; align-items: center; margin-left: auto; padding-right: 23px; }
.pager .icon { height: 18px; }
.pager input { width: 35px; height: 18px; padding: 0 1px; border: 1px solid #a9b8c3; background: #fff; text-align: right; }
.pager label { margin-left: 1px; }

.body { display: flex; flex: 1; }
.browser { display: flex; flex-direction: column; flex: none; width: 440px; padding: 0 2px; }
.tabs { display: flex; height: 17px; }
.tab { width: 58px; text-align: left; border-left: 1px solid #a9b8c3; border-top: 1px solid #d0d6da; color: #000; }
.tab.active { position: relative; display: flex; align-items: center; gap: 5px; width: 38px; height: 18px; border-right: 1px solid #a9b8c3; background: #fff; }
.tab svg { width: 8px; height: 8px; }
.pane { flex: 1; display: flex; flex-direction: column; border: 1px solid #a9b8c3; border-width: 1px 2px 2px 1px; margin-bottom: 2px; }
.btools { display: flex; align-items: center; height: 33px; padding: 0 8px 8px 5px; }
.btools button { display: flex; align-items: center; justify-content: center; width: 20px; height: 20px; }
.btools .on { background: #ffc07d; border: 1px solid #a89878; }
.btools svg { width: 16px; height: 16px; }
.btools .link { width: 22px; height: 22px; margin-left: auto; align-self: flex-end; margin-bottom: -4px; }
.btools .link svg { width: 22px; height: 22px; }
.search { display: flex; align-items: center; height: 18px; border: 1px solid #a9b8c3; border-width: 1px 0; background: #fff; }
.search input { flex: 1; min-width: 0; height: 16px; border: 0; padding: 0 3px; background: none; outline: 0; }
.search svg { width: 13px; height: 13px; }
.search button { display: flex; align-items: center; justify-content: center; width: 11px; height: 16px; margin-left: 2px; background: #eee; }
.search button svg { width: 8px; height: 6px; }
.ctools { display: flex; gap: 6px; height: 28px; padding: 4px 0 0 5px; }
.ctools button { height: 20px; }
.ctools svg { width: 21px; height: 20px; }
.entities { height: 17px; padding-left: 3px; border: 1px solid #a9b8c3; border-width: 1px 0; line-height: 18px; color: #000; }
.tree { flex: 1; margin: 0; padding: 0; list-style: none; background: #fff; overflow: hidden; }
.tree li { display: flex; align-items: center; height: 17px; padding-left: 4px; white-space: nowrap; }
.tree .l1 { padding-left: 23px; } .tree .l2 { padding-left: 42px; } .tree .l3 { padding-left: 61px; } .tree .l4 { padding-left: 80px; }
.tree svg { width: 15px; height: 14px; margin-right: 6px; }
.tree .l3 svg { margin-right: 4px; }
.twisty { display: flex; flex: none; justify-content: center; width: 11px; margin-right: 5px; }
.l0 .twisty { margin-right: 10px; } .l4 .twisty { margin-right: 10px; }
i.down { border: 3px solid transparent; border-top-color: #000; border-bottom: 0; }
i.right { border: 3px solid transparent; border-left: 4px solid #888; border-right: 0; }
.hscroll { display: flex; height: 12px; border: 1px solid #c4ccd2; background: #fff; }
.hscroll svg { width: 12px; height: 10px; background: #f0f0f0; }
.rail { flex: 1; display: flex; }
.thumb { width: 91%; background: #f0f0f0; border: 1px solid #c4ccd2; border-width: 0 1px; }
.splitter { position: relative; display: flex; justify-content: center; align-items: center; gap: 6px; height: 10px; padding-bottom: 3px; }
.splitter i { width: 2px; height: 2px; background: #888; }
.splitter svg { position: absolute; right: 3px; top: 0; width: 8px; height: 10px; }
.props { flex: none; height: 299px; background: #fff; border-top: 1px solid #a9b8c3; }
.props table { width: 100%; border-collapse: collapse; table-layout: fixed; background: #f0f0f0; border-bottom: 1px solid #ccc; }
.props th { height: 20px; padding: 3px 0 0 2px; text-align: left; font: 12px/16px "Noto Sans", sans-serif; color: #000; }
.props th:first-child { width: 134px; }

.work { flex: 1; min-width: 0; display: flex; flex-direction: column; border-left: 1px solid #000; border-right: 1px solid #000; margin-right: 3px; margin-bottom: 1px; }
.pagetitle { height: 29px; margin: 0; text-align: center; font: 19px/30px "Noto Sans", sans-serif; color: #333; }
.stage { display: flex; padding-right: 6px; }
.side { flex: none; width: 35px; padding: 5px 0 0 9px; }
.dots { display: block; width: 20px; height: 2px; background: linear-gradient(90deg, #444 2px, transparent 2px) 0 0 / 6px 2px repeat-x; }
.side svg { width: 20px; height: 22px; margin-top: 6px; }
.chart { flex: 1; min-width: 0; border: 1px solid #00f4f4; }
.chart svg { width: 100%; height: auto; font-family: "Noto Sans", sans-serif; }
.curve { fill: none; stroke-width: 2.4; }
.blue { stroke: #2d5ccd; stroke-opacity: .75; }
.red { stroke: #cd2a1c; stroke-opacity: .72; }
.tick { font-size: 12px; fill: #111; }
.plot-title { font-size: 19px; text-anchor: middle; fill: #000; }
.axis { font-size: 16px; text-anchor: middle; fill: #000; }
.legend { font-size: 13px; text-anchor: end; }

.toolbar.plot { height: 36px; padding: 0 0 7px; }
.wheel { width: 20px; height: 20px; border: 1px solid #667; border-radius: 50%; background: conic-gradient(#7f0, #0f8, #0ff, #08f, #00f, #80f, #f0f, #f08, #f00, #f80, #ff0, #7f0); }
.sliders { width: 159px; margin: 0 2px; }
.sliders input { display: block; width: 100%; appearance: none; background: #c8c8c8; border-top: 1px solid #777; border-left: 1px solid #777; }
.sliders .time { height: 10px; margin-bottom: 2px; }
.sliders .speed { height: 5px; }
.sliders input::-webkit-slider-thumb { appearance: none; width: 20px; height: 8px; background: linear-gradient(#888, #888) 9px 0 / 1px 5px no-repeat #f0f0f0; border: 1px solid; border-color: #fff #000 #000 #fff; }
.sliders .speed::-webkit-slider-thumb { height: 4px; }

.panel { display: flex; gap: 4px; margin: 0 6px 0 3px; padding: 6px 0 0 2px; height: 170px; border-top: 1px solid #909090; border-bottom: 1px solid #000; box-shadow: inset 0 1px #fff; font-size: 11px; }
.bevel { background: #f0f0f0; border: 1px solid; border-color: #fff #000 #000 #fff; box-shadow: inset -1px -1px #a0a0a0; color: #000; }
.bevel.dim { color: #868686; }
.sunken { border: 1px solid; border-color: #8f8f8f #e8e8e8 #e8e8e8 #8f8f8f; box-shadow: inset 1px 1px #000; background: #fff; outline: 0; }
.fields { flex: 1; min-width: 0; padding-top: 1px; }
.filerow { display: flex; height: 22px; margin-bottom: 3px; }
.filerow label { flex: none; width: 47px; padding-left: 1px; line-height: 22px; white-space: nowrap; }
.sq { flex: none; width: 20px; height: 21px; } .sq svg { width: 18px; height: 18px; }
.combo { position: relative; flex: 1; height: 22px; min-width: 0; color: #000; }
.combo select { appearance: none; width: 100%; height: 22px; padding: 0 20px 0 3px; border: 1px solid; border-color: #8f8f8f #e8e8e8 #e8e8e8 #8f8f8f; box-shadow: inset 1px 1px #000; background: #fff; opacity: 1; }
.combo.grey select { background: #eee; }
.drop { position: absolute; right: 1px; top: 2px; width: 14px; height: 19px; display: flex; align-items: center; justify-content: center; background: #f0f0f0; border: 1px solid; border-color: #fff #000 #000 #fff; pointer-events: none; }
.drop .down { border-width: 4px 4px 0; }
.grey .down { border-top-color: #777; }
.cols { display: flex; gap: 7px; }
.xcol { flex: none; width: 315px; }
.xrow { display: flex; align-items: center; height: 22px; margin-bottom: 2px; }
.xname { flex: none; width: 77px; height: 22px; line-height: 20px; text-align: left; padding-left: 1px; white-space: nowrap; }
button.xname { padding-left: 4px; }
.dim { color: #868686; }
.spin { display: flex; flex: none; flex-direction: column; width: 18px; margin-right: 2px; }
.spin button { display: flex; align-items: center; justify-content: center; height: 12px; }
.spin svg { width: 6px; height: 4px; }
.ycol { min-width: 0; }
.type { flex: 334 1 0; } .req { flex: 356 1 0; } .comp { flex: 362 1 0; }
.yhead { display: flex; align-items: center; height: 22px; margin-bottom: 9px; white-space: nowrap; }
.type .yhead { margin-bottom: 6px; }
.yhead label { flex: none; }
.type .ylabel { width: 39px; } .req .ylabel { width: 61px; } .comp .ylabel { width: 72px; }
.sorts { display: flex; padding-top: 3px; }
.type .sorts { padding-top: 0; }
.sorts button { width: 21px; height: 17px; } .sorts svg { width: 17px; height: 13px; }
.yhead .flabel { margin-left: auto; color: #000; }
.yhead input { width: 116px; height: 22px; margin-left: 6px; }
.listbox { display: flex; height: 68px; margin-bottom: 4px; padding: 2px 1px 0; border: 1px solid; border-color: #8f8f8f #fff #fff #8f8f8f; background: #fff; }
.listbox select { flex: 1; min-width: 0; height: 64px; border: 0; padding: 0; background: #fff; color: #000; outline: 0; overflow: hidden; scrollbar-width: none; }
.listbox option { height: 16px; min-height: 16px; padding: 0 1px; line-height: 16px; }
.listbox option:checked { color: #fff; background: #0078d7 linear-gradient(#0078d7, #0078d7); border-bottom: 1px solid #000; }
.vscroll { display: flex; flex-direction: column; justify-content: space-between; width: 11px; background: #fff; }
.vscroll svg { width: 11px; height: 11px; background: #f0f0f0; }
.vthumb { height: 27px; margin-bottom: 15px; background: #f0f0f0; border: 1px solid #a9b8c3; }
.yfoot { display: flex; align-items: center; justify-content: flex-end; }
.wide { width: 62px; height: 23px; }
.more { width: 23px; height: 23px; margin-left: 4px; font-size: 12px; font-weight: 700; line-height: 12px; padding-bottom: 5px; }
.flat { appearance: none; width: 15px; height: 15px; margin: 0 auto 0 4px; border: 1px solid #c8c8cc; background: #f0f0f0; }
.actions { flex: none; width: 70px; display: flex; flex-direction: column; }
.actions button { height: 23px; margin-bottom: 10px; }
.actions .dialog { margin: 10px 0 26px; }
.apply { outline: 1px dotted #000; outline-offset: -3px; }
.preview { display: flex; align-items: center; white-space: nowrap; }
.preview input { appearance: none; width: 13px; height: 13px; margin: 0 5px 0 2px; border: 1px solid; border-color: #8f8f8f #fff #fff #8f8f8f; box-shadow: inset 1px 1px #000; background: #fff; }
.status { height: 24px; padding-left: 4px; line-height: 24px; }
.pointer { position: absolute; left: 190px; top: 170px; width: 13px; height: 20px; }
</style>
